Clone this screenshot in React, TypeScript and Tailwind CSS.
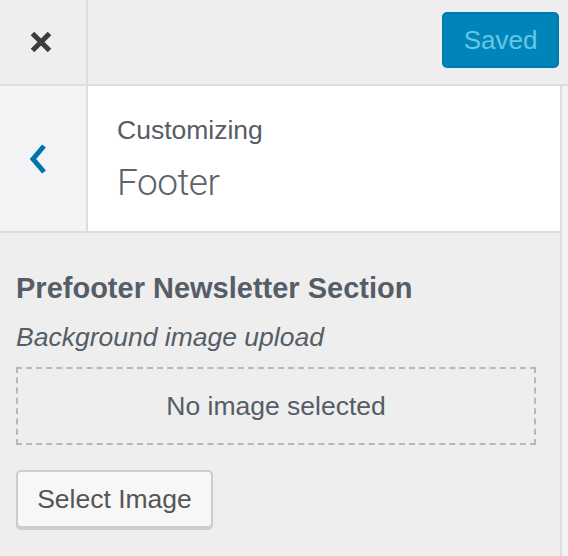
export default function App() {
  return (
    <div className="flex h-[556px] w-[568px] flex-col bg-[#eee] font-['Liberation_Sans',Arial,sans-serif] text-[#555d66]">
      {/* top bar */}
      <div className="flex h-[86px] shrink-0 border-b-2 border-[#ddd]">
        <div className="flex w-[88px] items-center justify-center border-r-2 border-[#ddd] pr-[4px]">
          <svg width="24" height="24" viewBox="0 0 24 24">
            <path d="M3.5 3.5 L20.5 20.5 M20.5 3.5 L3.5 20.5" stroke="#3c3c3c" strokeWidth="5" />
          </svg>
        </div>
        <div className="flex flex-1 items-start justify-end pr-[9px] pt-[12px]">
          <button className="flex h-[56px] w-[117px] items-center justify-center rounded-[5px] border-2 border-[#0079ad] bg-[#0085ba] pb-[1px] text-[26px] leading-[30px] text-[#66c6e4]">
            Saved
          </button>
        </div>
      </div>

      <div className="flex flex-1">
        <div className="w-[562px] border-r-2 border-[#ddd]">
          {/* section heading */}
          <div className="flex h-[147px] border-b-2 border-[#ddd]">
            <div className="flex w-[88px] items-center justify-center border-r-2 border-[#ddd] bg-[#f3f3f5] pr-[10px]">
              <svg width="18" height="30" viewBox="0 0 18 30">
                <polyline points="15,2 4,15 15,28" fill="none" stroke="#0073aa" strokeWidth="5" />
              </svg>
            </div>
            <div className="flex-1 bg-white pl-[29px] pt-[29px]">
              <div className="text-[26.5px] leading-[30px]">Customizing</div>
              <div className="mt-[16px] font-['Roboto',sans-serif] text-[37px] leading-[44px] font-light tracking-[-0.5px] text-[#5b636b]">
                Footer
              </div>
            </div>
          </div>

          {/* control */}
          <div className="px-[16px] pt-[39px]">
            <h3 className="text-[29px] leading-[32px] font-bold">Prefooter Newsletter Section</h3>
            <p className="mt-[18px] text-[26.5px] leading-[30px] italic">Background image upload</p>
            <div className="mt-[15px] flex h-[78px] w-[520px] items-center justify-center border-2 border-dashed border-[#b4b9be] text-[26.5px] leading-[30px]">
              No image selected
            </div>
            <button className="mt-[25px] flex h-[58px] w-[197px] items-center justify-center rounded-[5px] border-2 border-[#ccc] bg-[#f7f7f7] text-[26.5px] leading-[30px] text-[#555] shadow-[0_2px_0_#ccc]">
              Select Image
            </button>
          </div>
        </div>
        <div className="flex-1 bg-[#f3f3f3]" />
      </div>
    </div>
  );
}
